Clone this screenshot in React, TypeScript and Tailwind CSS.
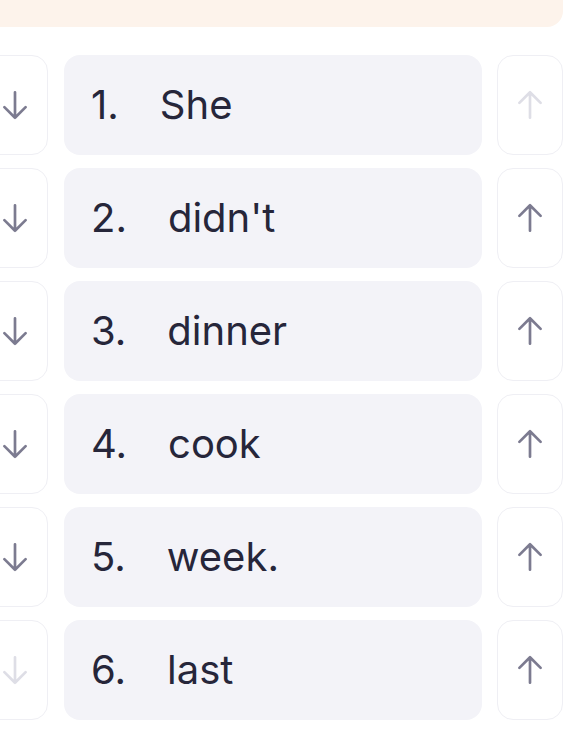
import { useState } from 'react';

const initialWords = ['She', "didn't", 'dinner', 'cook', 'week.', 'last'];

function ArrowIcon({ dir, disabled }: { dir: 'up' | 'down'; disabled: boolean }) {
  return (
    <svg
      width="34"
      height="34"
      viewBox="0 0 24 24"
      fill="none"
      stroke="currentColor"
      strokeWidth={1.9}
      strokeLinecap="round"
      strokeLinejoin="round"
      className={disabled ? 'text-[#dedee6]' : 'text-[#7c7b90]'}
    >
      {dir === 'up' ? (
        <path d="M4.5 10.5 12 3m0 0 7.5 7.5M12 3v18" />
      ) : (
        <path d="M19.5 13.5 12 21m0 0-7.5-7.5M12 21V3" />
      )}
    </svg>
  );
}

export default function App() {
  const [words, setWords] = useState(initialWords);

  const move = (i: number, delta: number) => {
    const j = i + delta;
    if (j < 0 || j >= words.length) return;
    const next = [...words];
    [next[i], next[j]] = [next[j], next[i]];
    setWords(next);
  };

  return (
    <div className="w-[574px] h-[744px] overflow-hidden bg-white font-['Inter',sans-serif]">
      <div className="w-[581px] -ml-[18px]">
        {/* Banner */}
        <div className="h-[27px] bg-[#fdf3eb] rounded-b-2xl" />

        {/* Word list */}
        <div className="mt-7 flex flex-col gap-[13px]">
          {words.map((word, i) => (
            <div key={word} className="flex items-stretch h-[100px]">
              <button
                onClick={() => move(i, 1)}
                className="w-[66px] shrink-0 flex items-center justify-center rounded-2xl border border-[#efeff4] bg-white"
              >
                <ArrowIcon dir="down" disabled={i === words.length - 1} />
              </button>
              <div className="flex-1 ml-4 mr-[15px] flex items-center gap-[41px] pl-[27px] rounded-2xl bg-[#f3f3f8] text-[40px] font-normal text-[#26263a]">
                <span>{i + 1}.</span>
                <span>{word}</span>
              </div>
              <button
                onClick={() => move(i, -1)}
                className="w-[66px] shrink-0 flex items-center justify-center rounded-2xl border border-[#efeff4] bg-white"
              >
                <ArrowIcon dir="up" disabled={i === 0} />
              </button>
            </div>
          ))}
        </div>
      </div>
    </div>
  );
}
